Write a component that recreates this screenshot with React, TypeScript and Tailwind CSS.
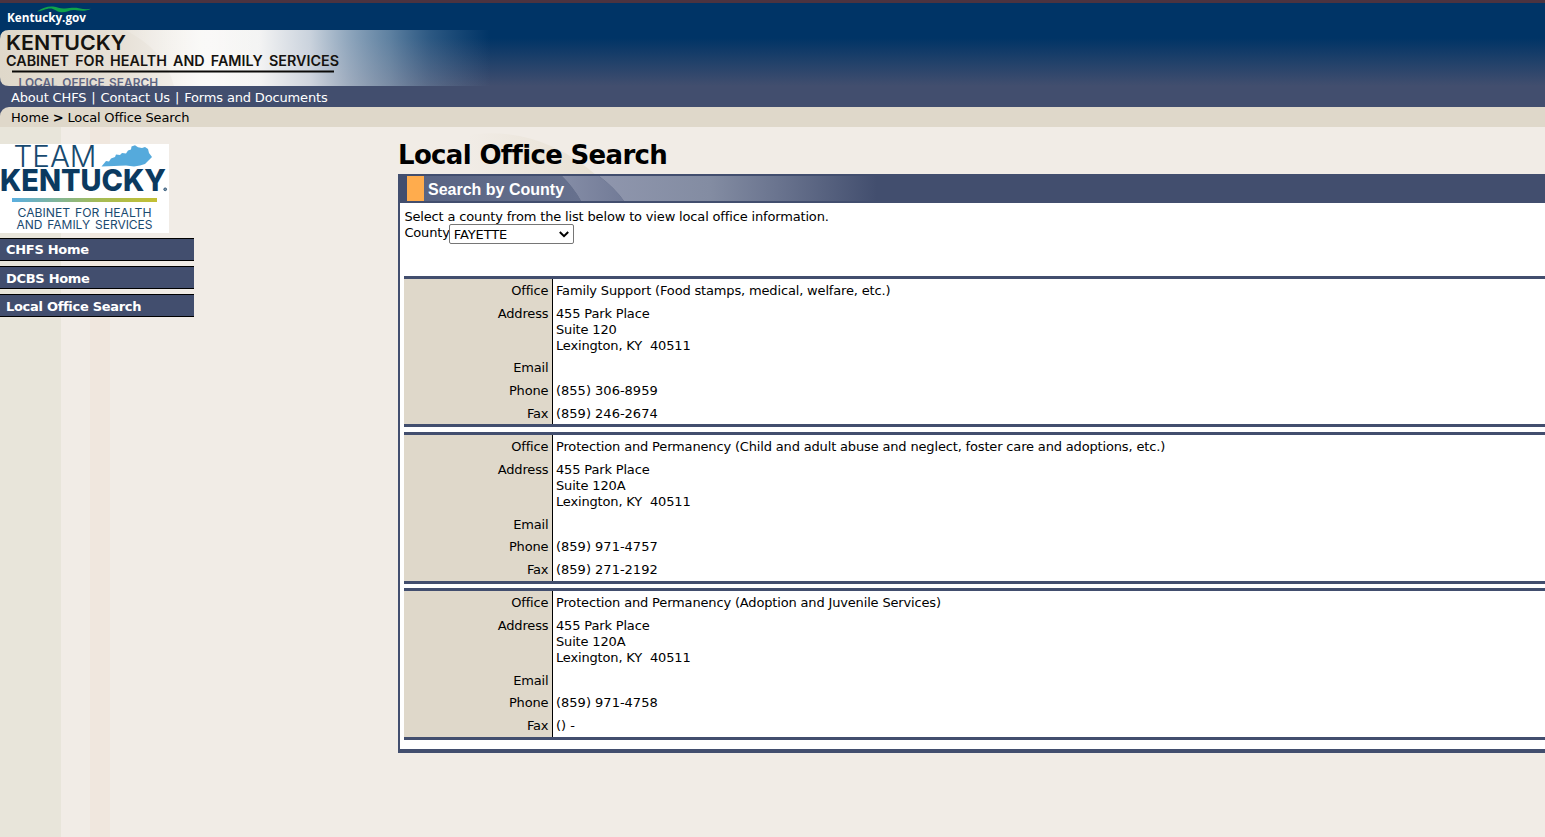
import React from 'react';

interface Office {
    name: string;
    address: string[];
    email: string;
    phone: string;
    fax: string;
}

const offices: Office[] = [
    {
        name: 'Family Support (Food stamps, medical, welfare, etc.)',
        address: ['455 Park Place', 'Suite 120', 'Lexington, KY  40511'],
        email: '',
        phone: '(855) 306-8959',
        fax: '(859) 246-2674',
    },
    {
        name: 'Protection and Permanency (Child and adult abuse and neglect, foster care and adoptions, etc.)',
        address: ['455 Park Place', 'Suite 120A', 'Lexington, KY  40511'],
        email: '',
        phone: '(859) 971-4757',
        fax: '(859) 271-2192',
    },
    {
        name: 'Protection and Permanency (Adoption and Juvenile Services)',
        address: ['455 Park Place', 'Suite 120A', 'Lexington, KY  40511'],
        email: '',
        phone: '(859) 971-4758',
        fax: '() -',
    },
];

const navLinks = ['CHFS Home', 'DCBS Home', 'Local Office Search'];

const KentuckyGovLogo: React.FC = () => (
    <svg width="100" height="27" viewBox="0 0 100 27" className="block">
        <path d="M37 8.5 C43 4.5 48 3 53 3.5 C58 4 60 6 65 5.5 C70 5 74 4.2 79 5.2 C83 6 87 6.5 91 5.8 C86 8.6 80 8 75 7 C70 6.2 66 10 60 9 C56 8 54 5.3 50 5.4 C46 5.5 43 7.5 37 8.5 Z" fill="#0fa44a" />
        <text x="7" y="18.6" textLength="79" lengthAdjust="spacingAndGlyphs" fill="#fff" fontFamily="Open Sans, sans-serif" fontWeight="700" fontSize="13">Kentucky.gov</text>
    </svg>
);

const AgencyBanner: React.FC = () => (
    <svg width="500" height="56" viewBox="0 0 500 56" className="block">
        <defs>
            <linearGradient id="bannerFade" x1="0" x2="1">
                <stop offset="0" stopColor="#dfd8ca" />
                <stop offset="0.24" stopColor="#e6e0d6" />
                <stop offset="0.4" stopColor="#f6f4f1" />
                <stop offset="0.52" stopColor="#f3f3f3" />
                <stop offset="0.62" stopColor="#e0e4ea" stopOpacity="0.9" />
                <stop offset="0.7" stopColor="#bccad8" stopOpacity="0.75" />
                <stop offset="0.78" stopColor="#a2b8cb" stopOpacity="0.58" />
                <stop offset="0.86" stopColor="#8ba6bf" stopOpacity="0.32" />
                <stop offset="0.98" stopColor="#7c98b4" stopOpacity="0" />
            </linearGradient>
            <linearGradient id="bannerRay" x1="0" x2="1">
                <stop offset="0" stopColor="#fff" stopOpacity="0.1" />
                <stop offset="0.6" stopColor="#fff" stopOpacity="0.5" />
                <stop offset="1" stopColor="#fff" stopOpacity="0" />
            </linearGradient>
        </defs>
        <path d="M9 0 H500 V56 H9 Q0 56 0 47 V9 Q0 0 9 0 Z" fill="url(#bannerFade)" />
        <path d="M125 0 H265 V56 H174 Q165 20 125 0 Z" fill="url(#bannerRay)" />
        <g fontFamily="Inter, sans-serif" fontWeight="600" fill="#15130f">
            <text x="6" y="20" textLength="120" lengthAdjust="spacingAndGlyphs" fontSize="20.5">KENTUCKY</text>
            <text x="6" y="36" textLength="333" lengthAdjust="spacingAndGlyphs" fontSize="14.2" wordSpacing="2.5">CABINET FOR HEALTH AND FAMILY SERVICES</text>
        </g>
        <rect x="12" y="40.5" width="322" height="2" fill="#0b0a08" />
        <text x="18.5" y="56.5" textLength="139.5" lengthAdjust="spacingAndGlyphs" fontFamily="Inter, sans-serif" fontWeight="600" fontSize="12" wordSpacing="1.5" fill="#5d6482">LOCAL OFFICE SEARCH</text>
    </svg>
);

const TeamKentuckyLogo: React.FC = () => (
    <svg width="169" height="89" viewBox="0 0 169 89" className="block bg-white">
        <defs>
            <linearGradient id="teamRule" x1="0" x2="1">
                <stop offset="0" stopColor="#5aaee0" />
                <stop offset="0.6" stopColor="#a5bb55" />
                <stop offset="1" stopColor="#c3bf33" />
            </linearGradient>
        </defs>
        <text x="13.5" y="22.5" textLength="83" lengthAdjust="spacingAndGlyphs" fontFamily="Inter, sans-serif" fontWeight="300" fontSize="29.5" fill="#174a70">TEAM</text>
        <path d="M101.5 22.5 L104 19.5 L106 17 L109 17.5 L111 14.5 L115 13 L116 10.5 L120 11 L122 9 L126 9.5 L128 6.5 L131 5.5 L131.5 2.5 L135 1.2 L138 3.2 L142 4 L145 3 L148 5 L149 9 L152 13 L149 16 L145 20 L140 21.5 L134 22.5 L126 21.5 L114 22 Z" fill="#55aadc" />
        <text x="0" y="47" textLength="166" lengthAdjust="spacingAndGlyphs" fontFamily="Inter, sans-serif" fontWeight="800" fontSize="29.5" fill="#0b3a60">KENTUCKY</text>
        <circle cx="165.2" cy="45.3" r="1.4" fill="#8398ab" stroke="#0b3a60" strokeWidth="0.7" />
        <rect x="12" y="54" width="145" height="4" fill="url(#teamRule)" />
        <g fontFamily="Inter, sans-serif" fontSize="11.8" fill="#1a4a70">
            <text x="17.5" y="72.5" textLength="134" lengthAdjust="spacingAndGlyphs" wordSpacing="1.5">CABINET FOR HEALTH</text>
            <text x="16.5" y="85" textLength="136" lengthAdjust="spacingAndGlyphs" wordSpacing="1.5">AND FAMILY SERVICES</text>
        </g>
    </svg>
);

const SearchBarBackdrop: React.FC = () => (
    <svg width="500" height="25" viewBox="0 0 500 25" className="absolute left-0 top-0">
        <defs>
            <linearGradient id="sheenLeft" x1="0" x2="1">
                <stop offset="0" stopColor="#586382" />
                <stop offset="1" stopColor="#67718e" />
            </linearGradient>
            <linearGradient id="sheenMiddle" x1="0" x2="1">
                <stop offset="0" stopColor="#858da6" />
                <stop offset="1" stopColor="#727b97" />
            </linearGradient>
            <linearGradient id="sheenRight" x1="0" x2="1">
                <stop offset="0" stopColor="#8f96ad" />
                <stop offset="0.4" stopColor="#838ca2" />
                <stop offset="0.65" stopColor="#69738e" />
                <stop offset="1" stopColor="#424e6e" />
            </linearGradient>
        </defs>
        <path d="M0 0 H155 Q167 12 174 25 H0 Z" fill="url(#sheenLeft)" />
        <path d="M155 0 H192 Q208 12 217 25 H174 Q167 12 155 0 Z" fill="url(#sheenMiddle)" />
        <path d="M192 0 H470 V25 H217 Q208 12 192 0 Z" fill="url(#sheenRight)" />
    </svg>
);

const HeadingSwoosh: React.FC = () => (
    <svg width="220" height="48" viewBox="0 0 220 48" className="absolute left-[70px] top-0">
        <defs>
            <linearGradient id="swoosh" x1="0" x2="1">
                <stop offset="0" stopColor="#e4dccb" stopOpacity="0" />
                <stop offset="0.6" stopColor="#e4dccb" stopOpacity="0.4" />
                <stop offset="1" stopColor="#e4dccb" stopOpacity="0.7" />
            </linearGradient>
        </defs>
        <path d="M0 8 Q70 -2 128 48 H0 Z" fill="url(#swoosh)" />
    </svg>
);

const Row: React.FC<{ label: string; numeric?: boolean; children?: React.ReactNode }> = ({ label, numeric, children }) => (
    <div className="flex">
        <div className="w-[149px] shrink-0 border-r border-black bg-[#dfd8ca] pr-[3.6px] pt-1 pb-[2.7px] text-right">{label}</div>
        <div className={`grow whitespace-pre pl-[3px] pt-1 pb-[2.7px] ${numeric ? 'tracking-normal' : ''}`}>{children}</div>
    </div>
);

const OfficeCard: React.FC<{ office: Office }> = ({ office }) => (
    <div className="mb-[4.7px] border-y-[3px] border-[#424e6e]">
        <Row label="Office">{office.name}</Row>
        <Row label="Address">
            {office.address.map((line) => (
                <div key={line}>{line}</div>
            ))}
        </Row>
        <Row label="Email">{office.email}</Row>
        <Row label="Phone" numeric>{office.phone}</Row>
        <Row label="Fax" numeric>{office.fax}</Row>
    </div>
);

const App: React.FC = () => {
    return (
        <div className="h-[837px] w-full overflow-hidden bg-[#f1ece6] font-['DejaVu_Sans',sans-serif] text-[13px] leading-4 tracking-[-0.16px] text-black">
            <header className="border-t-[3px] border-[#4b3340] bg-[linear-gradient(#003466_0px,#003466_35px,#424e6e_83px)]">
                <div className="tracking-normal">
                    <KentuckyGovLogo />
                    <AgencyBanner />
                </div>
                <nav className="flex h-[21px] items-center gap-[5px] pl-[11px] pt-[2px] text-white">
                    <a href="#">About CHFS</a>
                    <span>|</span>
                    <a href="#">Contact Us</a>
                    <span>|</span>
                    <a href="#">Forms and Documents</a>
                </nav>
            </header>
            <div className="bg-[#424e6e]">
                <div className="flex h-5 items-center gap-1 rounded-tl-[9px] bg-[#dfd8ca] pl-[11px] pt-[2px]">
                    <a href="#">Home</a>
                    <b>&gt;</b>
                    <span>Local Office Search</span>
                </div>
            </div>

            <div className="flex h-[710px] bg-[linear-gradient(90deg,#e8e5da_0px,#e8e5da_61px,#f1ece6_61px,#f1ece6_90px,#f0e7de_90px,#f0e7de_110px,#f1ece6_110px)]">
                <aside className="w-[398px] shrink-0 pt-[17px]">
                    <div className="tracking-normal">
                        <TeamKentuckyLogo />
                    </div>
                    <ul className="mt-[5px] flex w-[194px] flex-col gap-[5.2px]">
                        {navLinks.map((label) => (
                            <li key={label} className="h-[23px] border-y border-black bg-[#424e6e] pl-1.5 pt-[3.4px] font-bold tracking-[-0.3px] text-white">
                                <a href="#">{label}</a>
                            </li>
                        ))}
                    </ul>
                </aside>

                <main className="relative grow pt-[12px]">
                    <HeadingSwoosh />
                    <h1 className="relative h-[35px] text-[26px] font-bold leading-8 tracking-[-0.66px]">Local Office Search</h1>
                    <section className="relative h-[579px] border-b-4 border-l-2 border-[#424e6e] bg-white">
                        <div className="h-[29px] bg-[#424e6e] pl-[7px] pt-[2px]">
                            <div className="relative flex h-[25px]">
                                <SearchBarBackdrop />
                                <div className="relative w-[17px] bg-[#ffac4d]" />
                                <h2 className="relative pl-1 font-['Liberation_Sans',sans-serif] text-base font-bold leading-[28px] tracking-normal text-white">Search by County</h2>
                            </div>
                        </div>
                        <div className="pl-1 pt-[6px]">
                            <p className="pl-[0.4px]">Select a county from the list below to view local office information.</p>
                            <div className="flex h-[19px] pl-[0.4px]">
                                <label htmlFor="county">County</label>
                                <div className="relative -mt-px -ml-px">
                                    <select id="county" defaultValue="FAYETTE" className="h-5 w-[125px] appearance-none rounded-xs border border-[#767676] bg-white pl-1 pt-[2px] text-[13px] leading-4 tracking-[-0.1px]">
                                        <option>FAYETTE</option>
                                    </select>
                                    <svg width="10" height="7" viewBox="0 0 10 7" className="pointer-events-none absolute right-[5px] top-[7px]">
                                        <path d="M0.8 1 L5 5.2 L9.2 1" fill="none" stroke="#000" strokeWidth="2" />
                                    </svg>
                                </div>
                            </div>
                            <div className="mt-[32px]">
                                {offices.map((office) => (
                                    <OfficeCard key={office.phone} office={office} />
                                ))}
                            </div>
                        </div>
                    </section>
                </main>
            </div>
        </div>
    );
};

export default App;
